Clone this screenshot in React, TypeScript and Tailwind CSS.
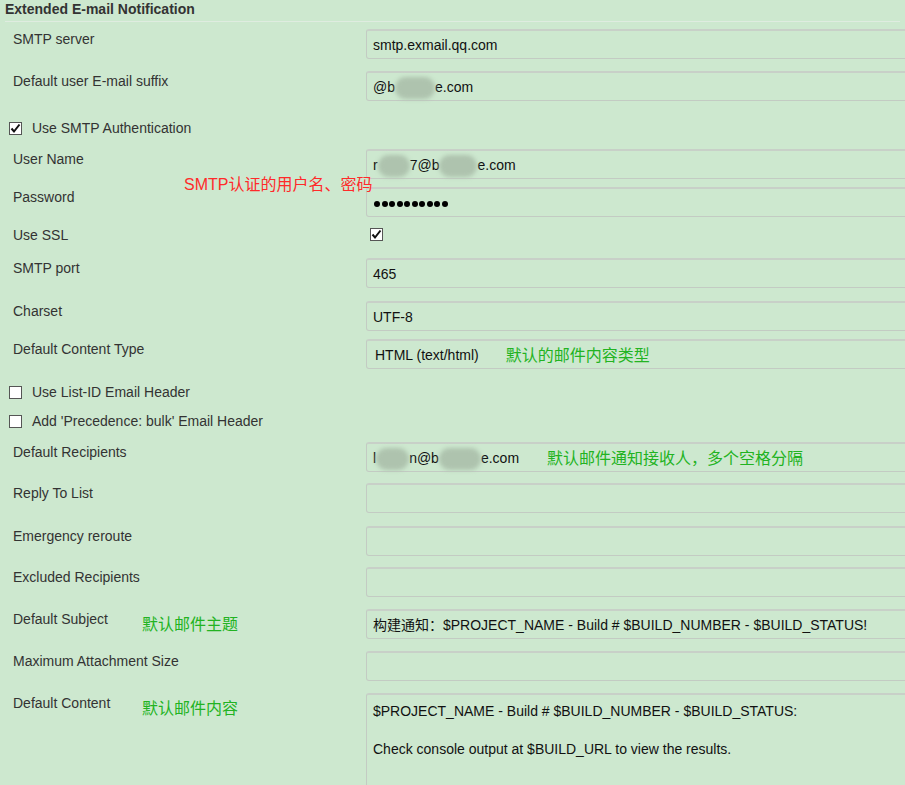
import type { ReactNode } from 'react'

const font = { fontFamily: '"Liberation Sans", Arial, "Noto Sans CJK SC", sans-serif' }

function Blur({ w }: { w: number }) {
  // mosaic blot that hides part of an address
  return (
    <span
      className="inline-block h-[22px] align-middle rounded-full bg-[#aec3ae] blur-[2px]"
      style={{ width: w }}
    />
  )
}

function Check({ on }: { on: boolean }) {
  return (
    <span className="flex h-[13px] w-[13px] shrink-0 items-center justify-center border border-[#555] bg-white">
      {on && (
        <svg width="11" height="11" viewBox="0 0 11 11">
          <path d="M1.5 5.5 L4 8.5 L9.5 1.5" fill="none" stroke="#111" strokeWidth="2" />
        </svg>
      )}
    </span>
  )
}

function Box({ children, className = '' }: { children?: ReactNode; className?: string }) {
  return (
    <div
      className={`-mr-[12px] flex h-[30px] flex-1 items-center whitespace-nowrap rounded-[3px] border border-[#c3cbc3] border-t-2 border-t-[#c8d0c8] pl-[6px] pt-[2px] text-[14px] text-[#111] ${className}`}
    >
      {children}
    </div>
  )
}

function Row({
  label,
  note,
  h,
  children,
}: {
  label: string
  note?: string
  h: string
  children?: ReactNode
}) {
  return (
    <div className={`flex items-start ${h}`}>
      <div className="flex w-[366px] shrink-0 items-start pl-[13px] text-[14px] text-[#333]">
        <span className="w-[129px] shrink-0 whitespace-nowrap">{label}</span>
        {note && <span className="mt-[4px] text-[16px] text-[#22b322]">{note}</span>}
      </div>
      {children}
    </div>
  )
}

function CheckRow({ label, on, h }: { label: string; on: boolean; h: string }) {
  return (
    <div className={`flex items-center gap-[10px] pl-[9px] text-[14px] text-[#333] ${h}`}>
      <Check on={on} />
      <span>{label}</span>
    </div>
  )
}

export default function App() {
  return (
    <div className="relative min-h-[785px] w-[905px] overflow-hidden bg-[#cde8cf]" style={font}>
      <div className="mx-[5px] h-[29px]">
        <div className="border-b border-[#dfece0] pb-[3px] pt-[1px] text-[14px] font-bold leading-[17px] text-[#333]">
          Extended E-mail Notification
        </div>
      </div>

      <Row label="SMTP server" h="h-[42px]">
        <Box>smtp.exmail.qq.com</Box>
      </Row>
      <Row label="Default user E-mail suffix" h="h-[42px]">
        <Box>
          @b<Blur w={40} />e.com
        </Box>
      </Row>
      <div className="h-[36px]">
        <CheckRow label="Use SMTP Authentication" on h="h-[30px]" />
      </div>
      <Row label="User Name" h="h-[38px]">
        <Box>
          r<Blur w={32} />7@b<Blur w={38} />e.com
        </Box>
      </Row>
      <Row label="Password" h="h-[38px]">
        <Box>
          <span className="flex gap-[1.5px] pl-[1px]">
            {Array.from({ length: 10 }).map((_, i) => (
              <span key={i} className="h-[6px] w-[6px] rounded-full bg-black" />
            ))}
          </span>
        </Box>
      </Row>
      <Row label="Use SSL" h="h-[33px]">
        <div className="pl-[4px] pt-[3px]">
          <Check on />
        </div>
      </Row>
      <Row label="SMTP port" h="h-[43px]">
        <Box>465</Box>
      </Row>
      <Row label="Charset" h="h-[38px]">
        <Box>UTF-8</Box>
      </Row>
      <Row label="Default Content Type" h="h-[38px]">
        <Box className="pl-[8px]">
          HTML (text/html)
          <span className="ml-[27px] text-[16px] text-[#22b322]">默认的邮件内容类型</span>
        </Box>
      </Row>
      <CheckRow label="Use List-ID Email Header" on={false} h="h-[29px] pt-[2px]" />
      <CheckRow label="Add 'Precedence: bulk' Email Header" on={false} h="h-[36px] pb-[5px]" />
      <Row label="Default Recipients" h="h-[41px]">
        <Box>
          l<Blur w={33} />n@b<Blur w={42} />e.com
          <span className="ml-[28px] text-[16px] text-[#22b322]">默认邮件通知接收人，多个空格分隔</span>
        </Box>
      </Row>
      <Row label="Reply To List" h="h-[43px]">
        <Box />
      </Row>
      <Row label="Emergency reroute" h="h-[41px]">
        <Box />
      </Row>
      <Row label="Excluded Recipients" h="h-[42px]">
        <Box />
      </Row>
      <Row label="Default Subject" note="默认邮件主题" h="h-[42px]">
        <Box>构建通知：$PROJECT_NAME - Build # $BUILD_NUMBER - $BUILD_STATUS!</Box>
      </Row>
      <Row label="Maximum Attachment Size" h="h-[42px]">
        <Box />
      </Row>
      <Row label="Default Content" note="默认邮件内容" h="h-[100px]">
        <div className="-mr-[12px] h-[110px] flex-1 rounded-[3px] border border-[#c3cbc3] border-t-2 border-t-[#c8d0c8] px-[6px] pt-[7px] text-[14px] leading-[19px] text-[#111]">
          <div>$PROJECT_NAME - Build # $BUILD_NUMBER - $BUILD_STATUS:</div>
          <div>&nbsp;</div>
          <div>Check console output at $BUILD_URL to view the results.</div>
        </div>
      </Row>

      {/* red annotation laid over the labels */}
      <div className="absolute left-[184px] top-[175px] text-[16px] leading-[20px] text-[#ff2a2a]">
        SMTP认证的用户名、密码
      </div>
    </div>
  )
}
